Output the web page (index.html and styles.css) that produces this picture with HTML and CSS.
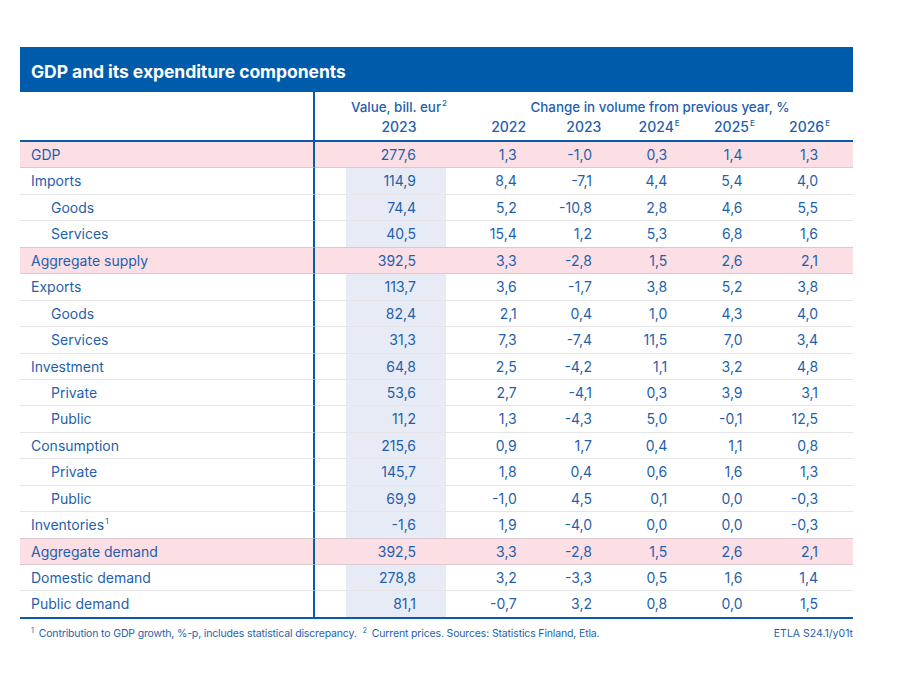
FILE: index.html
```html
<!DOCTYPE html>
<html lang="en">
<head>
<meta charset="utf-8">
<title>GDP and its expenditure components</title>
<link rel="stylesheet" href="styles.css">
</head>
<body>
<div class="panel">
  <div class="title">GDP and its expenditure components</div>
  <table class="tbl">
    <colgroup>
      <col class="c-label"><col class="c-val"><col class="c-yr"><col class="c-yr"><col class="c-yr"><col class="c-yr"><col class="c-last">
    </colgroup>
    <thead>
      <tr>
        <th class="h-label" rowspan="2"></th>
        <th class="h-val">Value, bill. eur<sup>2</sup></th>
        <th class="h-span" colspan="5">Change in volume from previous year, %</th>
      </tr>
      <tr>
        <th class="h-val h2">2023</th>
        <th class="h2">2022</th>
        <th class="h2">2023</th>
        <th class="h2">2024<sup>E</sup></th>
        <th class="h2">2025<sup>E</sup></th>
        <th class="h2 h-last">2026<sup>E</sup></th>
      </tr>
    </thead>
    <tbody>
      <tr class="pink"><td class="lab">GDP</td><td class="val">277,6</td><td>1,3</td><td>-1,0</td><td>0,3</td><td>1,4</td><td class="last">1,3</td></tr>
      <tr><td class="lab">Imports</td><td class="val">114,9</td><td>8,4</td><td>-7,1</td><td>4,4</td><td>5,4</td><td class="last">4,0</td></tr>
      <tr><td class="lab ind">Goods</td><td class="val">74,4</td><td>5,2</td><td>-10,8</td><td>2,8</td><td>4,6</td><td class="last">5,5</td></tr>
      <tr class="pre"><td class="lab ind">Services</td><td class="val">40,5</td><td>15,4</td><td>1,2</td><td>5,3</td><td>6,8</td><td class="last">1,6</td></tr>
      <tr class="pink"><td class="lab">Aggregate supply</td><td class="val">392,5</td><td>3,3</td><td>-2,8</td><td>1,5</td><td>2,6</td><td class="last">2,1</td></tr>
      <tr><td class="lab">Exports</td><td class="val">113,7</td><td>3,6</td><td>-1,7</td><td>3,8</td><td>5,2</td><td class="last">3,8</td></tr>
      <tr><td class="lab ind">Goods</td><td class="val">82,4</td><td>2,1</td><td>0,4</td><td>1,0</td><td>4,3</td><td class="last">4,0</td></tr>
      <tr><td class="lab ind">Services</td><td class="val">31,3</td><td>7,3</td><td>-7,4</td><td>11,5</td><td>7,0</td><td class="last">3,4</td></tr>
      <tr><td class="lab">Investment</td><td class="val">64,8</td><td>2,5</td><td>-4,2</td><td>1,1</td><td>3,2</td><td class="last">4,8</td></tr>
      <tr><td class="lab ind">Private</td><td class="val">53,6</td><td>2,7</td><td>-4,1</td><td>0,3</td><td>3,9</td><td class="last">3,1</td></tr>
      <tr><td class="lab ind">Public</td><td class="val">11,2</td><td>1,3</td><td>-4,3</td><td>5,0</td><td>-0,1</td><td class="last">12,5</td></tr>
      <tr><td class="lab">Consumption</td><td class="val">215,6</td><td>0,9</td><td>1,7</td><td>0,4</td><td>1,1</td><td class="last">0,8</td></tr>
      <tr><td class="lab ind">Private</td><td class="val">145,7</td><td>1,8</td><td>0,4</td><td>0,6</td><td>1,6</td><td class="last">1,3</td></tr>
      <tr><td class="lab ind">Public</td><td class="val">69,9</td><td>-1,0</td><td>4,5</td><td>0,1</td><td>0,0</td><td class="last">-0,3</td></tr>
      <tr class="pre"><td class="lab">Inventories<sup>1</sup></td><td class="val">-1,6</td><td>1,9</td><td>-4,0</td><td>0,0</td><td>0,0</td><td class="last">-0,3</td></tr>
      <tr class="pink"><td class="lab">Aggregate demand</td><td class="val">392,5</td><td>3,3</td><td>-2,8</td><td>1,5</td><td>2,6</td><td class="last">2,1</td></tr>
      <tr><td class="lab">Domestic demand</td><td class="val">278,8</td><td>3,2</td><td>-3,3</td><td>0,5</td><td>1,6</td><td class="last">1,4</td></tr>
      <tr class="final"><td class="lab">Public demand</td><td class="val">81,1</td><td>-0,7</td><td>3,2</td><td>0,8</td><td>0,0</td><td class="last">1,5</td></tr>
    </tbody>
  </table>
  <div class="foot">
    <div class="notes"><span class="fn"><sup>1</sup>Contribution to GDP growth, %-p, includes statistical discrepancy.</span><span class="fn"><sup>2</sup>Current prices. Sources: Statistics Finland, Etla.</span></div>
    <div class="code">ETLA S24.1/y01t</div>
  </div>
</div>
</body>
</html>
```
FILE: styles.css
```css
html, body {
  margin: 0;
  padding: 0;
  background: #ffffff;
}
body {
  font-family: Inter, "Noto Sans", "Liberation Sans", sans-serif;
  color: #1f5fad;
}
.panel {
  width: 833px;
  margin: 47px 0 0 20px;
}
.title {
  height: 45px;
  background: #005bab;
  color: #ffffff;
  font-weight: 700;
  font-size: 17.5px;
  line-height: 49px;
  padding-left: 11px;
  letter-spacing: -0.05px;
}
.tbl {
  width: 833px;
  table-layout: fixed;
  border-collapse: separate;
  border-spacing: 0;
  font-size: 14px;
}
.c-label { width: 295px; }
.c-val { width: 156px; }
.c-yr { width: 75.25px; }
.c-last { width: 81px; }
th {
  font-weight: 500;
  font-size: 13.4px;
  padding: 0;
  text-align: center;
  line-height: 19px;
  vertical-align: bottom;
}
thead tr:first-child th {
  padding-top: 6px;
}
.h2 {
  font-size: 14px;
  padding-bottom: 4px;
  border-bottom: 2px solid #0a5aab;
}
.h-label {
  border-right: 2px solid #0a5aab;
  border-bottom: 2px solid #0a5aab;
}
.h-val {
  padding-left: 12px;
}
.h-span {
  padding-right: 4px;
}
.h-last {
  padding-right: 6px;
}
sup {
  font-size: 8px;
  line-height: 0;
  vertical-align: 6px;
  margin-left: 1px;
}
td {
  padding: 0 29.5px 0 0;
  height: 25.44px;
  line-height: 25.44px;
  text-align: right;
  border-bottom: 1px solid #e4e4e9;
  white-space: nowrap;
}
td.lab {
  text-align: left;
  padding: 0 0 0 11px;
  border-right: 2px solid #0a5aab;
}
td.lab.ind {
  padding-left: 31px;
}
td.val {
  padding-right: 55px;
  background: linear-gradient(to right, transparent 31px, #e6ebf5 31px, #e6ebf5 131px, transparent 131px);
}
td.last {
  padding-right: 35px;
}
tr.pink td {
  background: #fcdee5;
  border-bottom-color: #d9c9cf;
}
tr.pre td {
  border-bottom-color: #d9c9cf;
}
tr.final td {
  border-bottom: 2px solid #0a5aab;
}
.foot {
  display: flex;
  justify-content: space-between;
  align-items: baseline;
  font-size: 10.5px;
  margin-top: 8px;
}
.notes {
  padding-left: 11px;
  display: flex;
  gap: 6px;
  letter-spacing: -0.15px;
}
.fn sup {
  font-size: 7px;
  vertical-align: 4px;
  margin: 0 5px 0 0;
}
.code {
  text-align: right;
}
```
